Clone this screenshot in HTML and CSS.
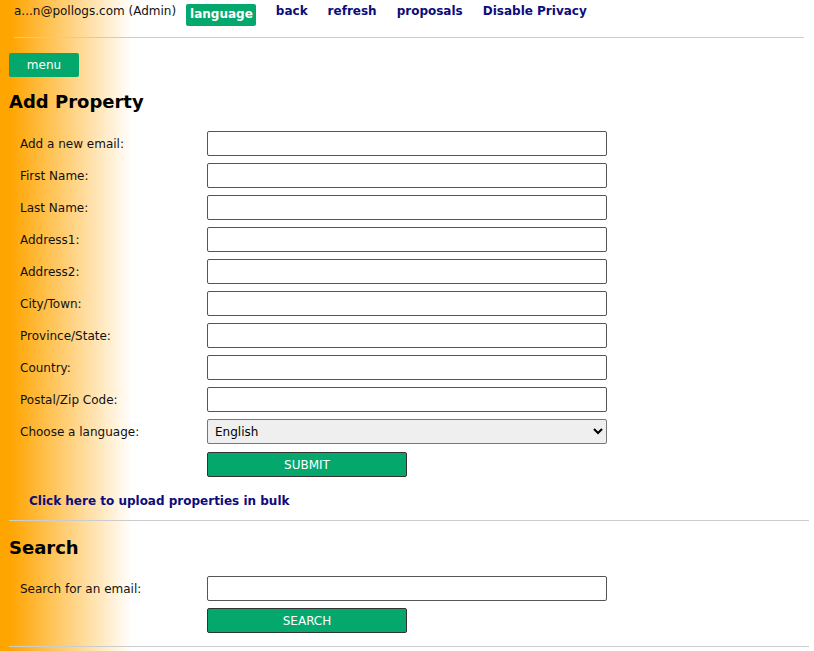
FILE: index.html
```html
<!DOCTYPE html>
<html lang="en">
<head>
    <meta charset="UTF-8">
    <title>Add Property</title>
    <link rel="stylesheet" href="styles.css">
</head>
<body>
    <div class="topbar">
        <span class="user">a...n@pollogs.com (Admin)</span>
        <a class="lang-btn" href="#">language</a>
        <a class="top-link" href="#">back</a>
        <a class="top-link" href="#">refresh</a>
        <a class="top-link" href="#">proposals</a>
        <a class="top-link" href="#">Disable Privacy</a>
    </div>
    <hr class="top-rule">

    <button class="menu-btn">menu</button>

    <h2>Add Property</h2>
    <form class="prop-form">
        <table class="form-table">
            <tr><td class="lbl">Add a new email:</td><td><input type="text"></td></tr>
            <tr><td class="lbl">First Name:</td><td><input type="text"></td></tr>
            <tr><td class="lbl">Last Name:</td><td><input type="text"></td></tr>
            <tr><td class="lbl">Address1:</td><td><input type="text"></td></tr>
            <tr><td class="lbl">Address2:</td><td><input type="text"></td></tr>
            <tr><td class="lbl">City/Town:</td><td><input type="text"></td></tr>
            <tr><td class="lbl">Province/State:</td><td><input type="text"></td></tr>
            <tr><td class="lbl">Country:</td><td><input type="text"></td></tr>
            <tr><td class="lbl">Postal/Zip Code:</td><td><input type="text"></td></tr>
            <tr>
                <td class="lbl">Choose a language:</td>
                <td>
                    <select>
                        <option>English</option>
                        <option>Français</option>
                    </select>
                </td>
            </tr>
            <tr><td></td><td><input type="submit" class="go-btn" value="SUBMIT"></td></tr>
        </table>
    </form>
    <a class="bulk-link" href="#">Click here to upload properties in bulk</a>
    <hr>

    <h2 class="search-title">Search</h2>
    <form class="search-form">
        <table class="form-table">
            <tr><td class="lbl">Search for an email:</td><td><input type="text"></td></tr>
            <tr><td></td><td><input type="submit" class="go-btn search-btn" value="SEARCH"></td></tr>
        </table>
    </form>
    <hr>
</body>
</html>
```

FILE: styles.css
```css
body {
    font-family: "DejaVu Sans", Verdana, sans-serif;
    margin: 0;
    padding: 4px 5px 0 9px;
    font-size: 12px;
    color: #111;
    background: linear-gradient(to right, #ffa500 10px, #ffffff 132px);
    min-height: 651px;
    box-sizing: border-box;
}
.topbar {
    display: flex;
    align-items: flex-start;
    padding: 0 5px;
    height: 22px;
}
.user {
    font-size: 12px;
    line-height: 15px;
}
.lang-btn {
    background-color: #04a86c;
    color: white;
    font-weight: bold;
    font-size: 12px;
    text-decoration: none;
    border-radius: 2px;
    padding: 3px 3px 4px 4px;
    line-height: 15px;
    margin-left: 10px;
}
.top-link {
    color: #0c0c7c;
    font-weight: bold;
    font-size: 12px;
    text-decoration: none;
    line-height: 15px;
    margin-left: 20px;
}
hr {
    border: none;
    border-top: 1px solid #cccccc;
    margin: 0;
}
.top-rule {
    margin: 11px 5px 15px;
}
.menu-btn {
    display: block;
    width: 70px;
    height: 24px;
    background-color: #04a86c;
    color: white;
    border: none;
    border-radius: 2px;
    font-family: inherit;
    font-size: 12px;
}
h2 {
    font-size: 18px;
    color: #000;
    margin: 14px 0 19px;
}
.search-title {
    margin: 16px 0 18px;
}
.form-table {
    border-collapse: collapse;
}
.form-table td {
    padding: 0 0 7px;
}
.form-table .lbl {
    padding-left: 11px;
    width: 187px;
    font-size: 12px;
}
input[type="text"], select {
    display: block;
    width: 400px;
    height: 25px;
    box-sizing: border-box;
    border: 1px solid #555;
    border-radius: 2px;
    margin: 0;
    font-family: inherit;
    font-size: 12px;
}
select {
    background-color: #efefef;
    border-color: #777;
    padding-left: 3px;
}
.go-btn {
    display: block;
    width: 200px;
    height: 25px;
    background-color: #04a86c;
    color: white;
    border: 1px solid #333;
    border-radius: 2px;
    font-family: inherit;
    font-size: 12px;
    margin: 1px 0 0;
}
.search-btn {
    margin-top: 0;
}
.bulk-link {
    display: block;
    color: #0c0c7c;
    font-weight: bold;
    font-size: 12px;
    text-decoration: none;
    margin: 10px 0 12px 20px;
}
.search-form {
    margin-bottom: 6px;
}
```
